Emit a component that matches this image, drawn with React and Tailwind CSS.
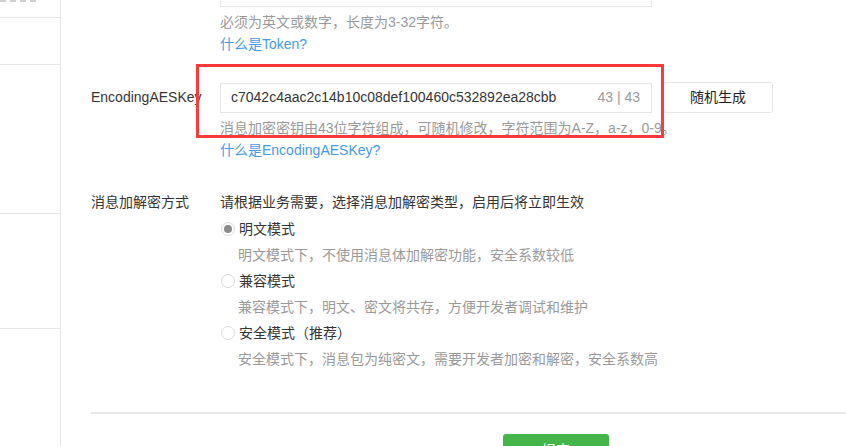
import { useState } from 'react';

const modes = [
  { id: 'plain', label: '明文模式', desc: '明文模式下，不使用消息体加解密功能，安全系数较低' },
  { id: 'compat', label: '兼容模式', desc: '兼容模式下，明文、密文将共存，方便开发者调试和维护' },
  { id: 'safe', label: '安全模式（推荐）', desc: '安全模式下，消息包为纯密文，需要开发者加密和解密，安全系数高' },
];

export default function App() {
  const [mode, setMode] = useState('plain');
  const aesKey = 'c7042c4aac2c14b10c08def100460c532892ea28cbb';

  return (
    <div
      className="relative flex h-[446px] w-[846px] overflow-hidden bg-white text-[14px] text-[#353535]"
      style={{ fontFamily: '"Liberation Sans", "Noto Sans CJK SC", sans-serif' }}
    >
      {/* Sidebar */}
      <div className="flex w-[61px] shrink-0 flex-col border-r border-[#e7e7eb]">
        <div className="h-[18px] border-b border-[#e7e7eb]">
          <div className="w-[36px] border-t-2 border-dashed border-[#cfcfcf]" />
        </div>
        <div className="h-[47px] border-b border-[#e7e7eb]" />
        <div className="h-[149px] border-b border-[#e7e7eb]" />
        <div className="h-[115px] border-b border-[#e7e7eb]" />
      </div>

      {/* Main */}
      <div className="flex-1 pl-[30px]">
        {/* Token tail */}
        <div className="flex">
          <div className="w-[129px] shrink-0" />
          <div>
            <div className="-mt-[23px] h-[30px] w-[432px] border border-[#e7e7eb]" />
            <p className="mt-[4px] leading-[22px] text-[#9a9a9a]">必须为英文或数字，长度为3-32字符。</p>
            <a className="block leading-[22px] text-[#459ae9]">什么是Token?</a>
          </div>
        </div>

        {/* EncodingAESKey */}
        <div className="mt-[27px] flex">
          <div className="flex h-[30px] w-[129px] shrink-0 items-center">EncodingAESKey</div>
          <div>
            <div className="flex items-center gap-[11px]">
              <div className="flex h-[30px] w-[432px] items-center justify-between border border-[#e7e7eb] pl-[10px] pr-[11px]">
                <span>{aesKey}</span>
                <span className="text-[#9a9a9a]">43 | 43</span>
              </div>
              <button className="h-[31px] w-[110px] rounded-[3px] border border-[#e4e8eb] bg-white text-[#222]">
                随机生成
              </button>
            </div>
            <p className="mt-[4px] leading-[22px] text-[#9a9a9a]">
              消息加密密钥由43位字符组成，可随机修改，字符范围为A-Z，a-z，0-9。
            </p>
            <a className="block leading-[22px] text-[#459ae9]">什么是EncodingAESKey?</a>
          </div>
        </div>

        {/* Encryption mode */}
        <div className="mt-[30px] flex">
          <div className="w-[129px] shrink-0 leading-[22px]">消息加解密方式</div>
          <div>
            <p className="leading-[22px]">请根据业务需要，选择消息加解密类型，启用后将立即生效</p>
            <div className="mt-[3px]">
              {modes.map((m) => (
                <div key={m.id}>
                  <label className="flex h-[26px] cursor-pointer items-center" onClick={() => setMode(m.id)}>
                    <span className="ml-[1px] mr-[4px] flex h-[14px] w-[14px] items-center justify-center rounded-full border border-[#d9dadc] bg-white">
                      {mode === m.id && <span className="h-[8px] w-[8px] rounded-full bg-[#8c8c8c]" />}
                    </span>
                    {m.label}
                  </label>
                  <p className="pl-[18px] leading-[26px] text-[#9a9a9a]">{m.desc}</p>
                </div>
              ))}
            </div>
          </div>
        </div>

        <div className="mt-[40px] border-t-2 border-[#e7e7eb]" />
        <div className="mt-[20px] pl-[412px]">
          <button className="h-[32px] w-[106px] rounded-[3px] bg-[#44b549] text-white">提交</button>
        </div>
      </div>

      {/* Red annotation box */}
      <div className="pointer-events-none absolute left-[196px] top-[64px] h-[74px] w-[468px] border-[3px] border-[#fc3a3a]" />
    </div>
  );
}
